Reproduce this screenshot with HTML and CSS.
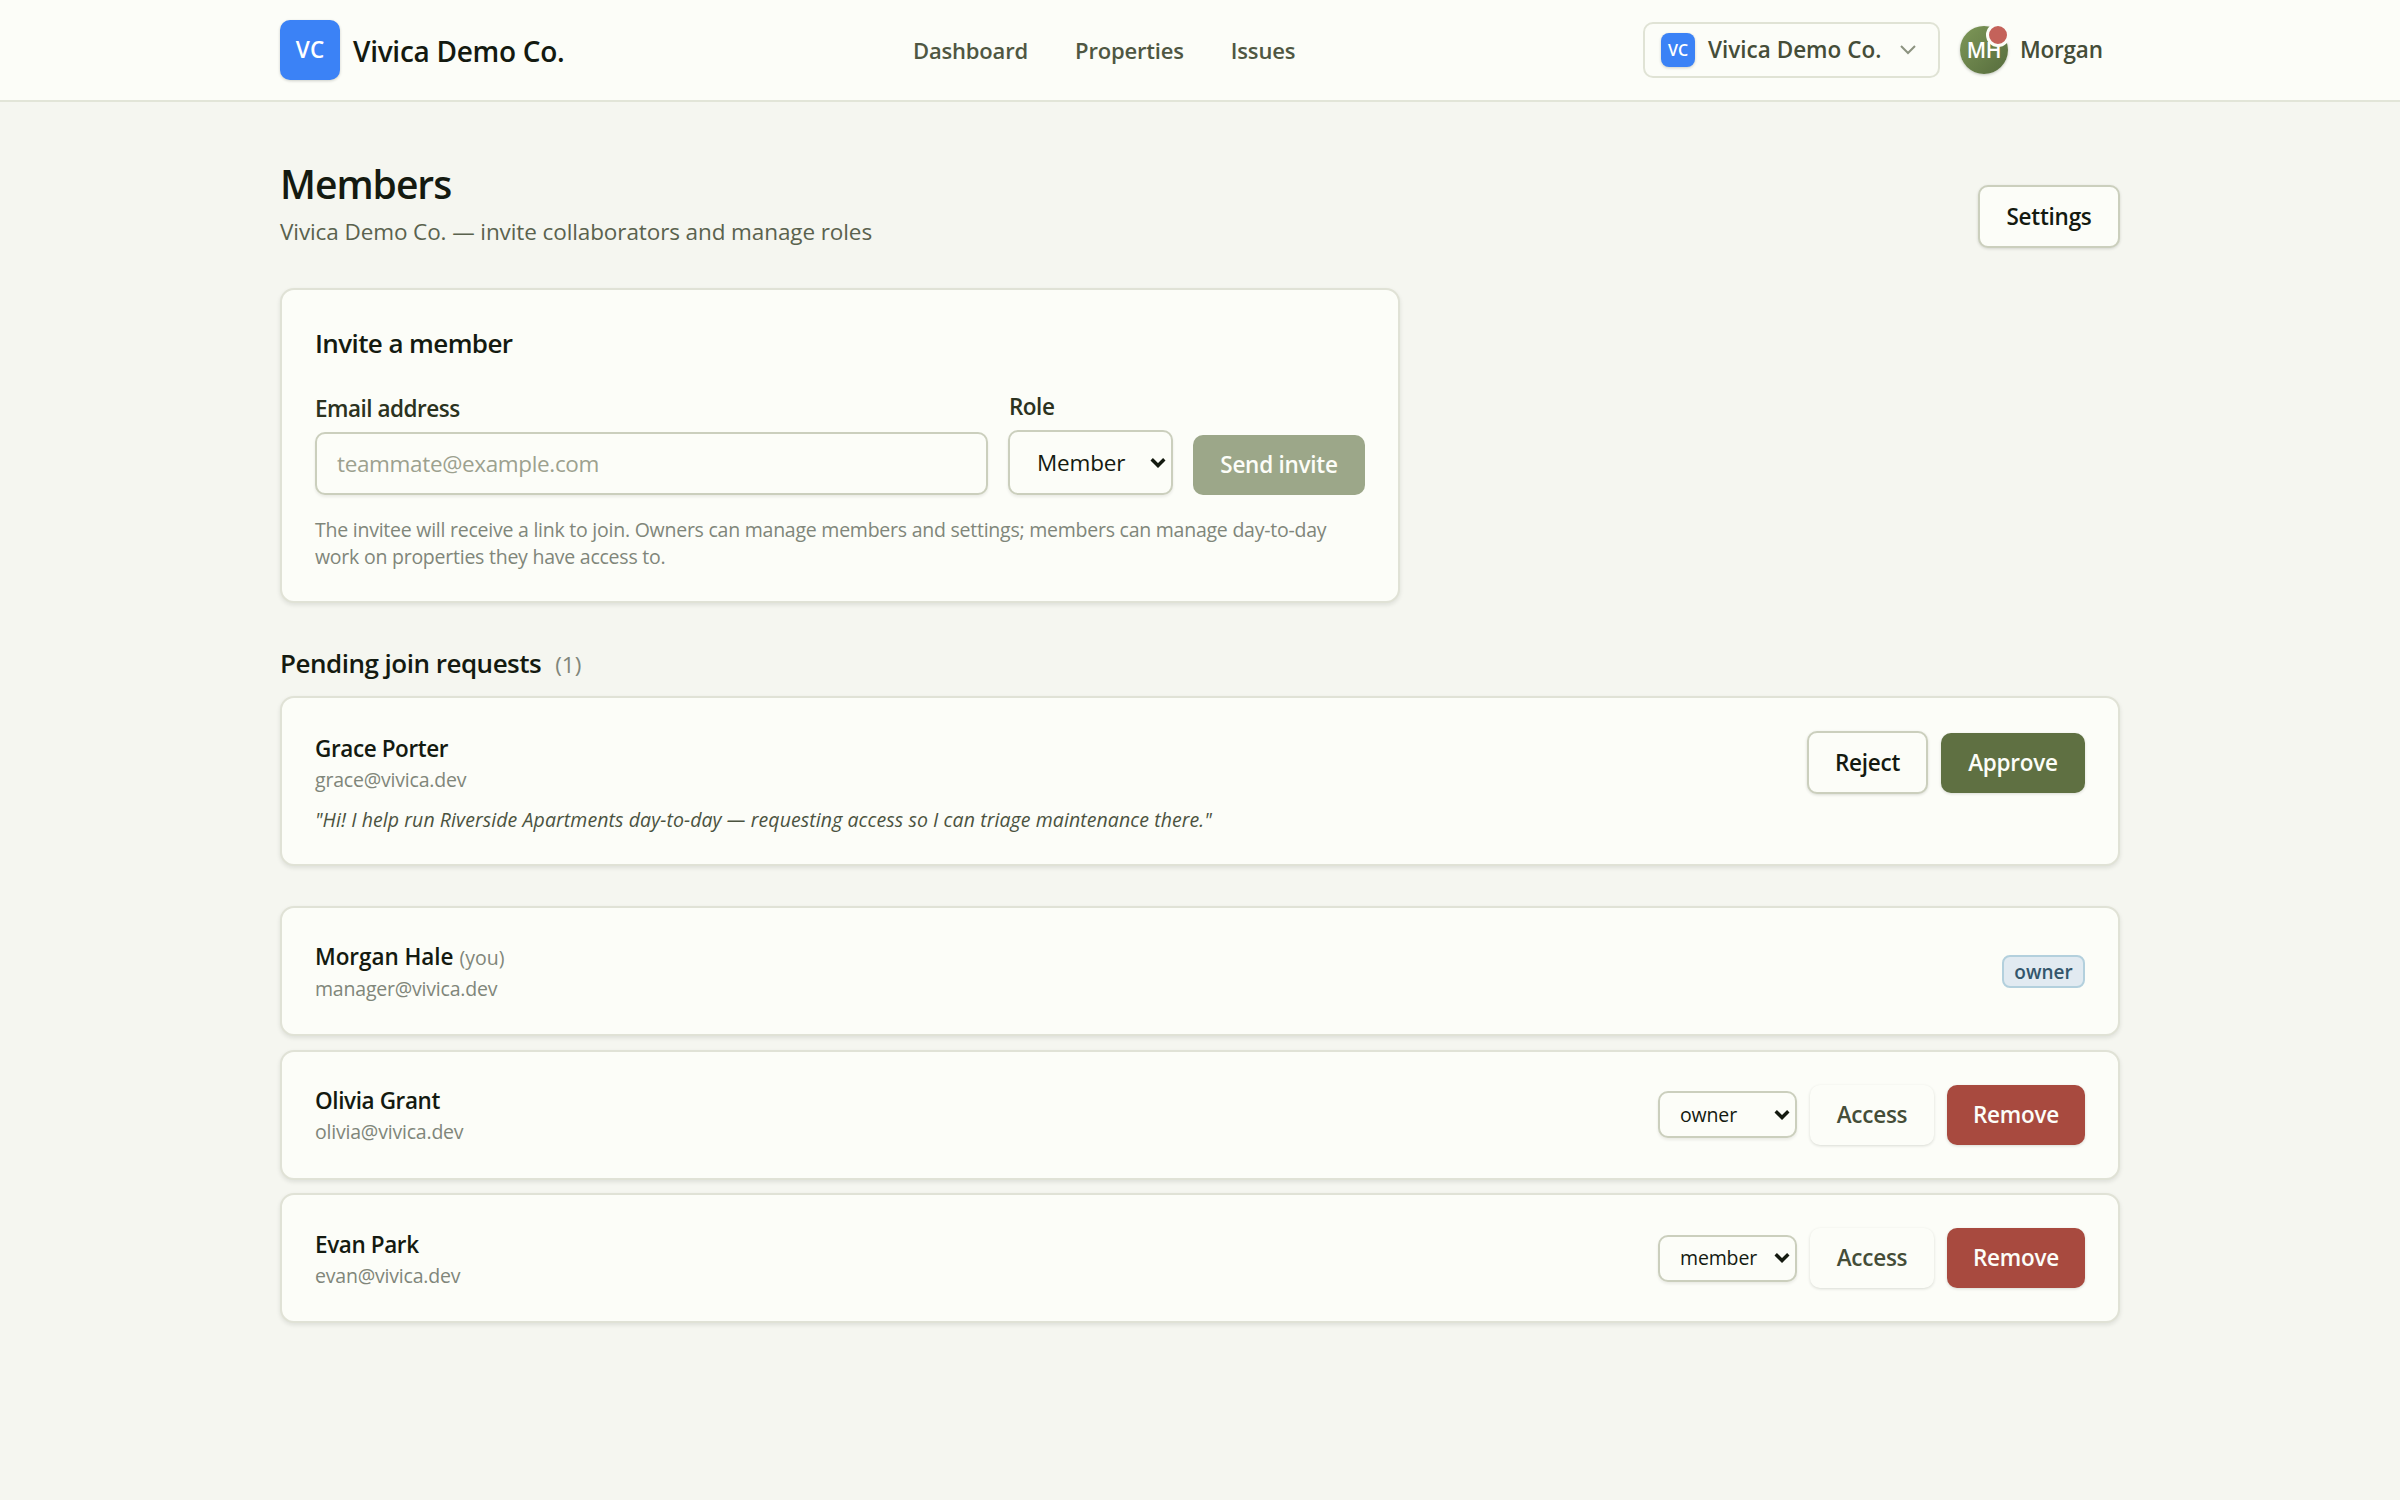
FILE: index.html
```html
<!DOCTYPE html>
<html lang="en">
<head>
<meta charset="utf-8">
<title>Members</title>
<link rel="stylesheet" href="styles.css">
</head>
<body>
<header class="topbar">
  <div class="topbar-inner">
    <a class="brand"><span class="brand-mark"><span>VC</span></span><span class="brand-name">Vivica Demo Co.</span></a>
    <nav class="nav"><a>Dashboard</a><a>Properties</a><a>Issues</a></nav>
    <div class="account">
      <button class="org"><span class="org-mark"><span>VC</span></span><span class="org-name">Vivica Demo Co.</span>
        <svg class="org-chevron" viewBox="0 0 18 12"><path d="M2 2l7 7 7-7"/></svg></button>
      <a class="user"><span class="avatar"><span class="initials">MH</span><i class="dot"></i></span><span class="user-name">Morgan</span></a>
    </div>
  </div>
</header>
<main class="page">
  <div class="page-head">
    <div>
      <h1><span>Members</span></h1>
      <p class="subtitle"><span>Vivica Demo Co. — invite collaborators and manage roles</span></p>
    </div>
    <button class="btn outline settings"><span>Settings</span></button>
  </div>

  <section class="card invite">
    <h2><span>Invite a member</span></h2>
    <form class="invite-form">
      <div class="field grow"><label class="label"><span>Email address</span></label><input class="input" placeholder="teammate@example.com"></div>
      <div class="field role"><label class="label"><span>Role</span></label>
        <button type="button" class="select big"><span>Member</span><svg class="arrow" viewBox="0 0 16 12"><path d="M1.7 2.2L8 8.5l6.3-6.3"/></svg></button></div>
      <button type="button" class="btn send"><span>Send invite</span></button>
    </form>
    <p class="hint"><span>The invitee will receive a link to join. Owners can manage members and settings; members can manage day-to-day</span><br><span>work on properties they have access to.</span></p>
  </section>

  <h2 class="pending-title"><span>Pending join requests</span><small>(1)</small></h2>
  <article class="card row request">
    <div class="who"><div class="name"><span>Grace Porter</span></div><div class="mail"><span>grace@vivica.dev</span></div>
      <p class="quote"><span>"Hi! I help run Riverside Apartments day-to-day — requesting access so I can triage maintenance there."</span></p></div>
    <div class="actions"><button class="btn outline reject"><span>Reject</span></button><button class="btn approve"><span>Approve</span></button></div>
  </article>

  <div class="members">
    <article class="card row">
      <div class="who"><div class="name self"><span>Morgan Hale</span><small>(you)</small></div><div class="mail"><span>manager@vivica.dev</span></div></div>
      <span class="badge"><span>owner</span></span>
    </article>
    <article class="card row">
      <div class="who"><div class="name"><span>Olivia Grant</span></div><div class="mail"><span>olivia@vivica.dev</span></div></div>
      <div class="actions"><button class="select small"><span>owner</span><svg class="arrow" viewBox="0 0 16 12"><path d="M1.7 2.2L8 8.5l6.3-6.3"/></svg></button><button class="btn access"><span>Access</span></button><button class="btn remove"><span>Remove</span></button></div>
    </article>
    <article class="card row">
      <div class="who"><div class="name"><span>Evan Park</span></div><div class="mail"><span>evan@vivica.dev</span></div></div>
      <div class="actions"><button class="select small"><span>member</span><svg class="arrow" viewBox="0 0 16 12"><path d="M1.7 2.2L8 8.5l6.3-6.3"/></svg></button><button class="btn access"><span>Access</span></button><button class="btn remove"><span>Remove</span></button></div>
    </article>
  </div>
</main>
</body>
</html>
```
FILE: styles.css
```css
* { box-sizing: border-box; margin: 0; }
body { background: #f5f6f0; color: #141a10; font: 400 22.5px/30px "Open Sans", "Noto Sans", sans-serif; }
button, input { font: inherit; color: inherit; }
h1, h2 { font-weight: 600; }
small { font-size: inherit; letter-spacing: 0; }

.topbar { height: 102px; background: #fcfdf8; border-bottom: 2px solid #e2e5d8; }
.topbar-inner { width: 1840px; height: 100px; margin: 0 auto; display: grid; grid-template-columns: 633px 1fr auto; align-items: center; }
.brand { display: flex; align-items: center; gap: 13px; }
.brand-mark { width: 60px; height: 60px; border-radius: 10px; background: #3b82f6; color: #fff; font-weight: 600; display: grid; place-items: center; box-shadow: 0 1px 3px rgba(20, 26, 16, .2); }
.brand-name { font-size: 28px; font-weight: 600; line-height: 40px; letter-spacing: -.28px; padding-top: 1px; }
.nav { display: flex; gap: 47px; color: #4f5742; font-weight: 600; font-size: 22px; letter-spacing: -.18px; padding-bottom: 1px; }
.account { display: flex; align-items: center; gap: 20px; color: #454d38; font-weight: 600; }
.org { width: 297px; height: 56px; border: 2px solid #e0e3d5; border-radius: 10px; background: #fcfdf8; display: flex; align-items: center; padding: 0 15px 0 16px; }
.org-mark { width: 34px; height: 34px; border-radius: 8px; background: #3b82f6; color: #fff; font-size: 16px; display: grid; place-items: center; box-shadow: 0 1px 3px rgba(20, 26, 16, .2); }
.org-name { margin-left: 13px; white-space: nowrap; letter-spacing: 0; }
.org-chevron { width: 18px; height: 12px; margin-left: auto; margin-right: 6px; fill: none; stroke: #8c9380; stroke-width: 2; }
.user { width: 160px; display: flex; align-items: center; gap: 12px; letter-spacing: -.2px; }
.avatar { position: relative; width: 48px; height: 48px; border-radius: 50%; background: linear-gradient(135deg, #7e9858, #566c3d); color: #fff; font-size: 21px; display: grid; place-items: center; box-shadow: 0 1px 3px rgba(20, 26, 16, .25); }
.dot { position: absolute; right: -2px; top: -3px; width: 24px; height: 24px; border-radius: 50%; background: #c4625a; border: 3px solid #fcfdf8; }

.page { width: 1840px; margin: 0 auto; padding: 58px 0 120px; }
.page-head { display: flex; justify-content: space-between; height: 88px; margin-bottom: 40px; }
h1 { font-size: 39px; line-height: 48px; letter-spacing: -1px; }
.subtitle { color: #5a624e; line-height: 36px; margin-top: 6px; letter-spacing: -.1px; }
.card { background: #fcfdf8; border: 2px solid #e0e2d6; border-radius: 14px; box-shadow: 0 2px 4px rgba(20, 26, 16, .1); }
.btn { height: 60px; border: 0; border-radius: 10px; padding: 0; display: grid; place-items: center; font-weight: 600; letter-spacing: -.25px; box-shadow: 0 1px 3px rgba(20, 26, 16, .15); white-space: nowrap; }
.outline { height: 63px; background: #fcfdf8; border: 2px solid #cbcfbd; }
.settings { width: 142px; align-self: flex-end; }

.invite { width: 1120px; height: 315px; padding: 33px; }
.invite h2 { font-size: 26px; line-height: 40px; letter-spacing: -.6px; }
.invite-form { display: flex; align-items: flex-end; gap: 20px; margin-top: 17px; height: 115px; }
.grow { flex: 1; }
.label { display: block; font-weight: 600; line-height: 34px; color: #2b3220; margin-bottom: 6px; letter-spacing: -.5px; }
.role .label { padding-left: 1px; }
.input { width: 100%; height: 63px; display: block; border: 2px solid #cbcfbd; border-radius: 10px; background: #fcfdf8; padding: 0 20px; box-shadow: 0 2px 3px rgba(20, 26, 16, .08); letter-spacing: -.35px; }
.input::placeholder { color: #9ca18f; opacity: 1; }
.role { width: 165px; }
.select { display: flex; align-items: center; justify-content: space-between; border: 2px solid #cbcfbd; border-radius: 10px; background: #fcfdf8; box-shadow: 0 2px 3px rgba(20, 26, 16, .08); letter-spacing: -.15px; }
.big { width: 165px; height: 65px; padding: 0 5px 0 27px; }
.arrow { width: 16px; height: 12px; fill: none; stroke: #141a10; stroke-width: 3.4; }
.send { width: 172px; background: #9ca789; color: #fcfdf8; box-shadow: none; }
.hint { font-size: 19.5px; line-height: 27px; color: #80867a; margin-top: 21px; white-space: nowrap; letter-spacing: -.24px; }

.pending-title { font-size: 26px; line-height: 40px; margin-top: 40px; display: flex; align-items: baseline; gap: 14px; letter-spacing: -.5px; }
.pending-title small { font-size: 22.5px; font-weight: 400; color: #80867a; }
.row { display: flex; justify-content: space-between; padding: 33px; }
.request { height: 170px; margin-top: 11px; }
.name { font-weight: 600; line-height: 34px; letter-spacing: -.4px; }
.request .name { padding-top: 1px; }
.self { letter-spacing: -.05px; }
.name small { font-size: 19.5px; font-weight: 400; color: #80867a; margin-left: 6px; }
.mail { font-size: 19.5px; line-height: 27px; color: #80867a; letter-spacing: -.2px; }
.quote { font-size: 19.5px; font-style: italic; line-height: 27px; color: #4b533f; margin-top: 13px; white-space: nowrap; letter-spacing: .085px; }
.actions { display: flex; align-items: center; gap: 13px; height: 63px; }
.reject { width: 121px; }
.approve { width: 144px; background: #5f7042; color: #fcfdf8; }
.members { margin-top: 40px; display: grid; gap: 13.5px; }
.members .row { height: 130px; align-items: center; padding: 0 33px; }
.badge { width: 83px; height: 33px; border: 2px solid #b3d0dd; border-radius: 8px; background: #e1eaf1; color: #33566c; font-size: 19px; font-weight: 600; display: grid; place-items: center; }
.small { width: 139px; height: 47px; padding: 0 5px 0 20px; font-size: 19.5px; }
.access { width: 124px; background: #fcfdf8; color: #454d38; }
.remove { width: 138px; background: #a84a3f; color: #fcfdf8; }
```
